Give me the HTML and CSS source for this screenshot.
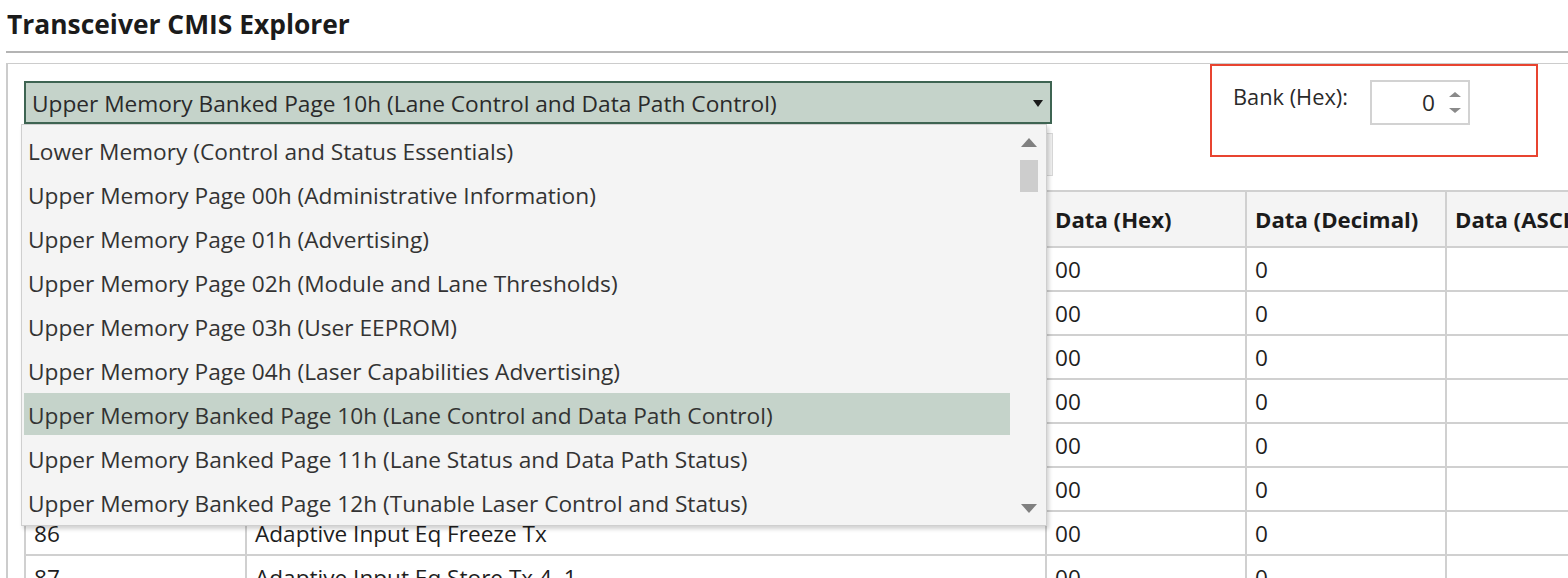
FILE: index.html
```html
<!DOCTYPE html>
<html lang="en">
<head>
<meta charset="utf-8">
<title>Transceiver CMIS Explorer</title>
<link rel="stylesheet" href="styles.css">
</head>
<body>
<div class="page">
  <header class="title-bar">
    <h1 class="title">Transceiver CMIS Explorer</h1>
  </header>
  <section class="panel">
    <div class="top-row">
      <div class="combo-wrap">
        <div class="combo">
          <span class="combo-text">Upper Memory Banked Page 10h (Lane Control and Data Path Control)</span>
          <span class="combo-arrow"></span>
        </div>
        <div class="dropdown">
          <ul class="dd-items">
            <li class="dd-item">Lower Memory (Control and Status Essentials)</li>
            <li class="dd-item">Upper Memory Page 00h (Administrative Information)</li>
            <li class="dd-item">Upper Memory Page 01h (Advertising)</li>
            <li class="dd-item">Upper Memory Page 02h (Module and Lane Thresholds)</li>
            <li class="dd-item">Upper Memory Page 03h (User EEPROM)</li>
            <li class="dd-item">Upper Memory Page 04h (Laser Capabilities Advertising)</li>
            <li class="dd-item selected">Upper Memory Banked Page 10h (Lane Control and Data Path Control)</li>
            <li class="dd-item">Upper Memory Banked Page 11h (Lane Status and Data Path Status)</li>
            <li class="dd-item">Upper Memory Banked Page 12h (Tunable Laser Control and Status)</li>
          </ul>
          <div class="dd-scroll">
            <span class="sb-arrow sb-up"></span>
            <span class="sb-thumb"></span>
            <span class="sb-space"></span>
            <span class="sb-arrow sb-down"></span>
          </div>
        </div>
      </div>
      <div class="bank">
        <span class="bank-label">Bank (Hex):</span>
        <div class="spinner">
          <span class="spin-value">0</span>
          <span class="spin-btns">
            <span class="spin-up"></span>
            <span class="spin-down"></span>
          </span>
        </div>
        <span class="annotation"></span>
      </div>
    </div>
    <div class="toolbar">
      <button class="tb-btn">Read Page</button>
      <button class="tb-btn">Write Page</button>
    </div>
    <table class="grid">
      <colgroup>
        <col class="c-off"><col class="c-name"><col class="c-hex"><col class="c-dec"><col class="c-asc">
      </colgroup>
      <thead>
        <tr><th>Offset (Hex)</th><th>Name</th><th>Data (Hex)</th><th>Data (Decimal)</th><th>Data (ASCII)</th></tr>
      </thead>
      <tbody>
        <tr><td>80</td><td>Data Path Deinit</td><td>00</td><td>0</td><td></td></tr>
        <tr><td>81</td><td>Input Polarity Flip Tx</td><td>00</td><td>0</td><td></td></tr>
        <tr><td>82</td><td>Output Disable Tx</td><td>00</td><td>0</td><td></td></tr>
        <tr><td>83</td><td>Auto Squelch Disable Tx</td><td>00</td><td>0</td><td></td></tr>
        <tr><td>84</td><td>Output Squelch Force Tx</td><td>00</td><td>0</td><td></td></tr>
        <tr><td>85</td><td>Reserved</td><td>00</td><td>0</td><td></td></tr>
        <tr><td>86</td><td>Adaptive Input Eq Freeze Tx</td><td>00</td><td>0</td><td></td></tr>
        <tr><td>87</td><td>Adaptive Input Eq Store Tx 4..1</td><td>00</td><td>0</td><td></td></tr>
      </tbody>
    </table>
  </section>
</div>
</body>
</html>
```

FILE: styles.css
```css
* { box-sizing: border-box; }
html, body {
  margin: 0;
  padding: 0;
  background: #ffffff;
  overflow: hidden;
}
body {
  font-family: "Open Sans", "Noto Sans", sans-serif;
  color: #2b2b2b;
  width: 1568px;
  height: 578px;
}
.page {
  width: 1700px;
}
.title-bar {
  height: 53px;
  margin-left: 6px;
  border-bottom: 2px solid #b4b4b4;
}
.title {
  margin: 0;
  padding: 6px 0 0 1px;
  font-size: 26.4px;
  line-height: 36px;
  font-weight: 700;
  color: #1b1b1b;
  white-space: nowrap;
}
.panel {
  margin: 10px 0 0 6px;
  border-top: 1px solid #cccccc;
  border-left: 2px solid #cccccc;
  padding: 0 0 0 16px;
  height: 600px;
}
.top-row {
  display: flex;
  align-items: flex-start;
}
.combo-wrap {
  position: relative;
  margin-top: 17px;
}
.combo {
  width: 1028px;
  height: 43px;
  background: #c5d3ca;
  border: 2px solid #3e6452;
  display: flex;
  align-items: center;
  padding: 1px 0 0 6px;
}
.combo-text {
  flex: 1;
  font-size: 22.7px;
  color: #2a2a2a;
  white-space: nowrap;
}
.combo-arrow {
  width: 0;
  height: 0;
  border-left: 5px solid transparent;
  border-right: 5px solid transparent;
  border-top: 7px solid #1a1a1a;
  margin-right: 7px;
}
.dropdown {
  position: absolute;
  left: -3px;
  top: 43px;
  width: 1026px;
  height: 402px;
  background: #f4f4f4;
  border: 1px solid #cfcfcf;
  box-shadow: 2px 3px 4px rgba(0, 0, 0, 0.18);
  display: flex;
  z-index: 5;
}
.dd-items {
  list-style: none;
  margin: 0;
  padding: 4px 2px 0 2px;
  width: 990px;
  flex: none;
}
.dd-item {
  height: 42px;
  margin-bottom: 2px;
  padding: 3px 0 0 4px;
  display: flex;
  align-items: center;
  font-size: 22.7px;
  color: #333333;
  white-space: nowrap;
}
.dd-item.selected {
  background: #c5d3ca;
}
.dd-scroll {
  width: 34px;
  flex: none;
  display: flex;
  flex-direction: column;
  align-items: center;
  padding: 13px 0 12px 0;
}
.sb-arrow {
  width: 0;
  height: 0;
  border-left: 8px solid transparent;
  border-right: 8px solid transparent;
}
.sb-up {
  border-bottom: 9px solid #808080;
}
.sb-down {
  border-top: 9px solid #808080;
}
.sb-thumb {
  width: 18px;
  height: 32px;
  background: #cdcdcd;
  margin-top: 13px;
}
.sb-space {
  flex: 1;
}
.bank {
  position: relative;
  display: flex;
  align-items: flex-start;
  margin: 16px 0 0 181px;
}
.bank-label {
  font-size: 21.8px;
  color: #2a2a2a;
  margin-top: 2px;
  width: 137px;
  white-space: nowrap;
}
.spinner {
  width: 100px;
  height: 45px;
  border: 2px solid #d2d2d2;
  display: flex;
  align-items: center;
  justify-content: flex-end;
  background: #ffffff;
}
.spin-value {
  font-size: 22.7px;
  color: #2a2a2a;
  margin-right: 14px;
}
.spin-btns {
  display: flex;
  flex-direction: column;
  gap: 11px;
  margin-right: 7px;
  margin-top: -1px;
}
.spin-up, .spin-down {
  width: 0;
  height: 0;
  border-left: 6px solid transparent;
  border-right: 6px solid transparent;
}
.spin-up { border-bottom: 5px solid #8a8a8a; }
.spin-down { border-top: 5px solid #8a8a8a; }
.annotation {
  position: absolute;
  left: -23px;
  top: -16px;
  width: 328px;
  height: 93px;
  border: 2px solid #e84430;
  pointer-events: none;
}
.toolbar {
  display: flex;
  justify-content: flex-end;
  gap: 8px;
  width: 1029px;
  margin-top: 8px;
  height: 43px;
}
.tb-btn {
  height: 43px;
  padding: 0 20px;
  background: #f0f0f0;
  border: 1px solid #d8d8d8;
  font-family: "Open Sans", sans-serif;
  font-size: 18px;
  color: #2a2a2a;
}
.grid {
  margin-top: 14px;
  border-collapse: separate;
  border-spacing: 0;
  table-layout: fixed;
  width: 1623px;
  border-top: 2px solid #d0d0d0;
  border-left: 2px solid #d0d0d0;
}
.c-off { width: 221px; }
.c-name { width: 800px; }
.c-hex { width: 200px; }
.c-dec { width: 200px; }
.c-asc { width: 200px; }
.grid th, .grid td {
  border-right: 2px solid #d0d0d0;
  border-bottom: 2px solid #d0d0d0;
  padding: 0 0 0 8px;
  text-align: left;
  white-space: nowrap;
  overflow: hidden;
}
.grid th {
  height: 56px;
  background: #f4f4f4;
  font-size: 22.2px;
  font-weight: 700;
  color: #1b1b1b;
}
.grid td {
  height: 44px;
  font-size: 22.6px;
  color: #1e1e1e;
}
```
